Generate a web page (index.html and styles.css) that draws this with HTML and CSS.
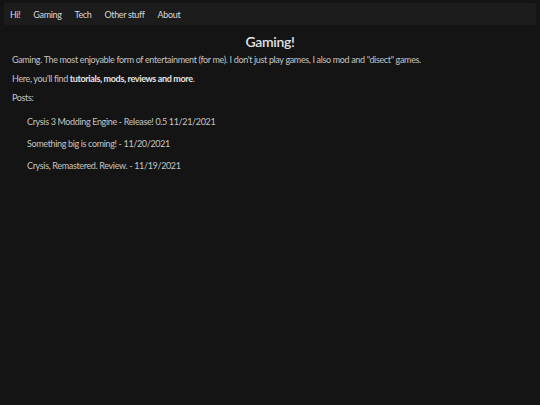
FILE: index.html
```html
<!DOCTYPE html>
<html>
<head>
<meta charset="utf-8">
<link rel="stylesheet" href="styles.css">
</head>
<body>
<nav class="nav">
  <a href="#">Hi!</a>
  <a href="#">Gaming</a>
  <a href="#">Tech</a>
  <a href="#">Other stuff</a>
  <a href="#">About</a>
</nav>
<main class="content">
  <h1 class="title">Gaming!</h1>
  <p>Gaming. The most enjoyable form of entertainment (for me). I don't just play games, I also mod and "disect" games.</p>
  <p>Here, you'll find <b>tutorials, mods, reviews and more</b>.</p>
  <p>Posts:</p>
  <ul class="posts">
    <li>Crysis 3 Modding Engine - Release! 0.5 11/21/2021</li>
    <li>Something big is coming! - 11/20/2021</li>
    <li>Crysis, Remastered. Review. - 11/19/2021</li>
  </ul>
</main>
</body>
</html>
```
FILE: styles.css
```css
html, body {
  margin: 0;
  background: #141414;
  color: #c4c4c4;
  font-family: "Lato", "Open Sans", sans-serif;
  font-size: 9px;
  letter-spacing: -0.35px;
}
body {
  padding: 3px 4px;
}
.nav {
  display: flex;
  gap: 13px;
  align-items: center;
  height: 22px;
  padding: 0 6px;
  background: #1c1c1c;
  border-radius: 2px;
}
.nav a {
  color: #d8d8d8;
  text-decoration: none;
  font-size: 9px;
}
.content {
  padding: 0 8px;
}
.title {
  text-align: center;
  font-size: 14px;
  font-weight: 600;
  letter-spacing: -0.3px;
  color: #e2e2e2;
  margin: 8px 0 5px;
}
p {
  margin: 0 0 9px;
  line-height: 10px;
}
p b {
  color: #e6e6e6;
  font-weight: 700;
}
.posts {
  list-style: none;
  margin: 14px 0 0;
  padding: 0 0 0 15px;
}
.posts li {
  line-height: 10px;
  margin-bottom: 12px;
}
```
